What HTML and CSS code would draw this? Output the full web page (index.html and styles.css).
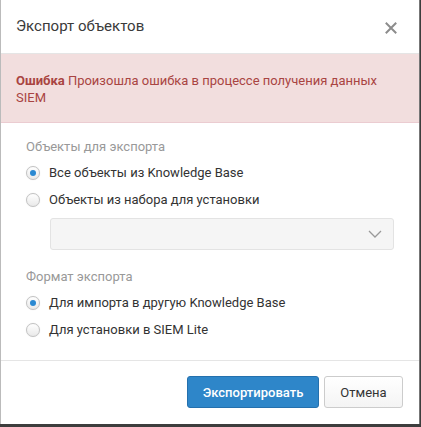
FILE: index.html
```html
<!DOCTYPE html>
<html lang="ru">
<head>
<meta charset="utf-8">
<link rel="stylesheet" href="styles.css">
</head>
<body>
<div class="modal">
  <div class="header">
    <div class="title">Экспорт объектов</div>
    <div class="close">
      <svg width="12" height="12" viewBox="0 0 12 12"><path d="M1.5 1.5 L10.5 10.5 M10.5 1.5 L1.5 10.5" stroke="#8c8c8c" stroke-width="2" stroke-linecap="square"/></svg>
    </div>
  </div>
  <div class="alert"><span class="strong">Ошибка</span> Произошла ошибка в процессе получения данных SIEM</div>
  <div class="body">
    <div class="label">Объекты для экспорта</div>
    <div class="radio"><span class="dot on"></span>Все объекты из Knowledge Base</div>
    <div class="radio"><span class="dot"></span>Объекты из набора для установки</div>
    <div class="select">
      <svg width="14" height="8" viewBox="0 0 14 8"><path d="M1 1 L7 7 L13 1" stroke="#999" stroke-width="1.3" fill="none"/></svg>
    </div>
    <div class="label second">Формат экспорта</div>
    <div class="radio"><span class="dot on"></span>Для импорта в другую Knowledge Base</div>
    <div class="radio"><span class="dot"></span>Для установки в SIEM Lite</div>
  </div>
  <div class="footer">
    <button class="btn primary">Экспортировать</button>
    <button class="btn">Отмена</button>
  </div>
</div>
</body>
</html>
```
FILE: styles.css
```css
html, body { margin: 0; padding: 0; }
body {
  width: 421px; height: 427px; overflow: hidden;
  background: #3d3d3d;
  font-family: Roboto, "Liberation Sans", sans-serif;
}
.modal {
  width: 418px; height: 424px;
  background: #fff;
  border-left: 1px solid #bbb;
  border-right: 1px solid #777;
  box-sizing: content-box;
  display: flex; flex-direction: column;
}
.header {
  height: 54px; box-sizing: border-box;
  border-bottom: 1px solid #e5e5e5;
  display: flex; align-items: center; justify-content: space-between;
  padding: 0 22px 0 15px;
}
.title { font-size: 15px; color: #3a3a3a; padding-bottom: 2px; }
.close { display: flex; padding-top: 2px; }
.alert {
  background: #f2dede; color: #a94442;
  font-size: 13px; line-height: 17px;
  padding: 18px 15px 17px 15px;
  border-bottom: 1px solid #ebccd1;
  height: 69px; box-sizing: border-box;
}
.alert .strong { font-weight: 700; }
.body { padding: 15px 25px 0 25px; flex: 1; border-bottom: 1px solid #e5e5e5; }
.label { font-size: 13px; color: #999; height: 17px; line-height: 17px; margin-bottom: 9px; }
.label.second { margin-top: 18px; }
.radio {
  display: flex; align-items: center; font-size: 13px; color: #333;
  height: 17px; line-height: 17px; margin-bottom: 10px;
}
.dot {
  width: 14px; height: 14px; border-radius: 50%;
  border: 1px solid #c2c2c2; box-sizing: border-box;
  background: linear-gradient(#fff, #e9e9e9);
  box-shadow: 0 0 1px rgba(0,0,0,0.15);
  margin-right: 9px; position: relative; flex: none;
}
.dot.on::after {
  content: ""; position: absolute; left: 3px; top: 3px;
  width: 6px; height: 6px; border-radius: 50%; background: #2a89d2;
}
.select {
  margin: 1px 0 0 24px; height: 32px; box-sizing: border-box;
  background: #f5f5f5; border: 1px solid #e3e3e3; border-radius: 3px;
  display: flex; align-items: center; justify-content: flex-end; padding-right: 11px;
}
.footer {
  height: 63px; box-sizing: border-box;
  display: flex; justify-content: flex-end; align-items: flex-start;
  padding: 15px 16px 0 0; gap: 5px;
}
.btn {
  font-family: Roboto, "Liberation Sans", sans-serif;
  font-size: 13px; height: 32px; border-radius: 3px;
  border: 1px solid #ccc; background: linear-gradient(#fff, #f4f4f4);
  color: #333; padding: 0 14px; width: 79px;
}
.btn.primary {
  width: 132px; color: #fff; font-weight: 500;
  background: #2e86c9; border-color: #2470ad;
}
```
